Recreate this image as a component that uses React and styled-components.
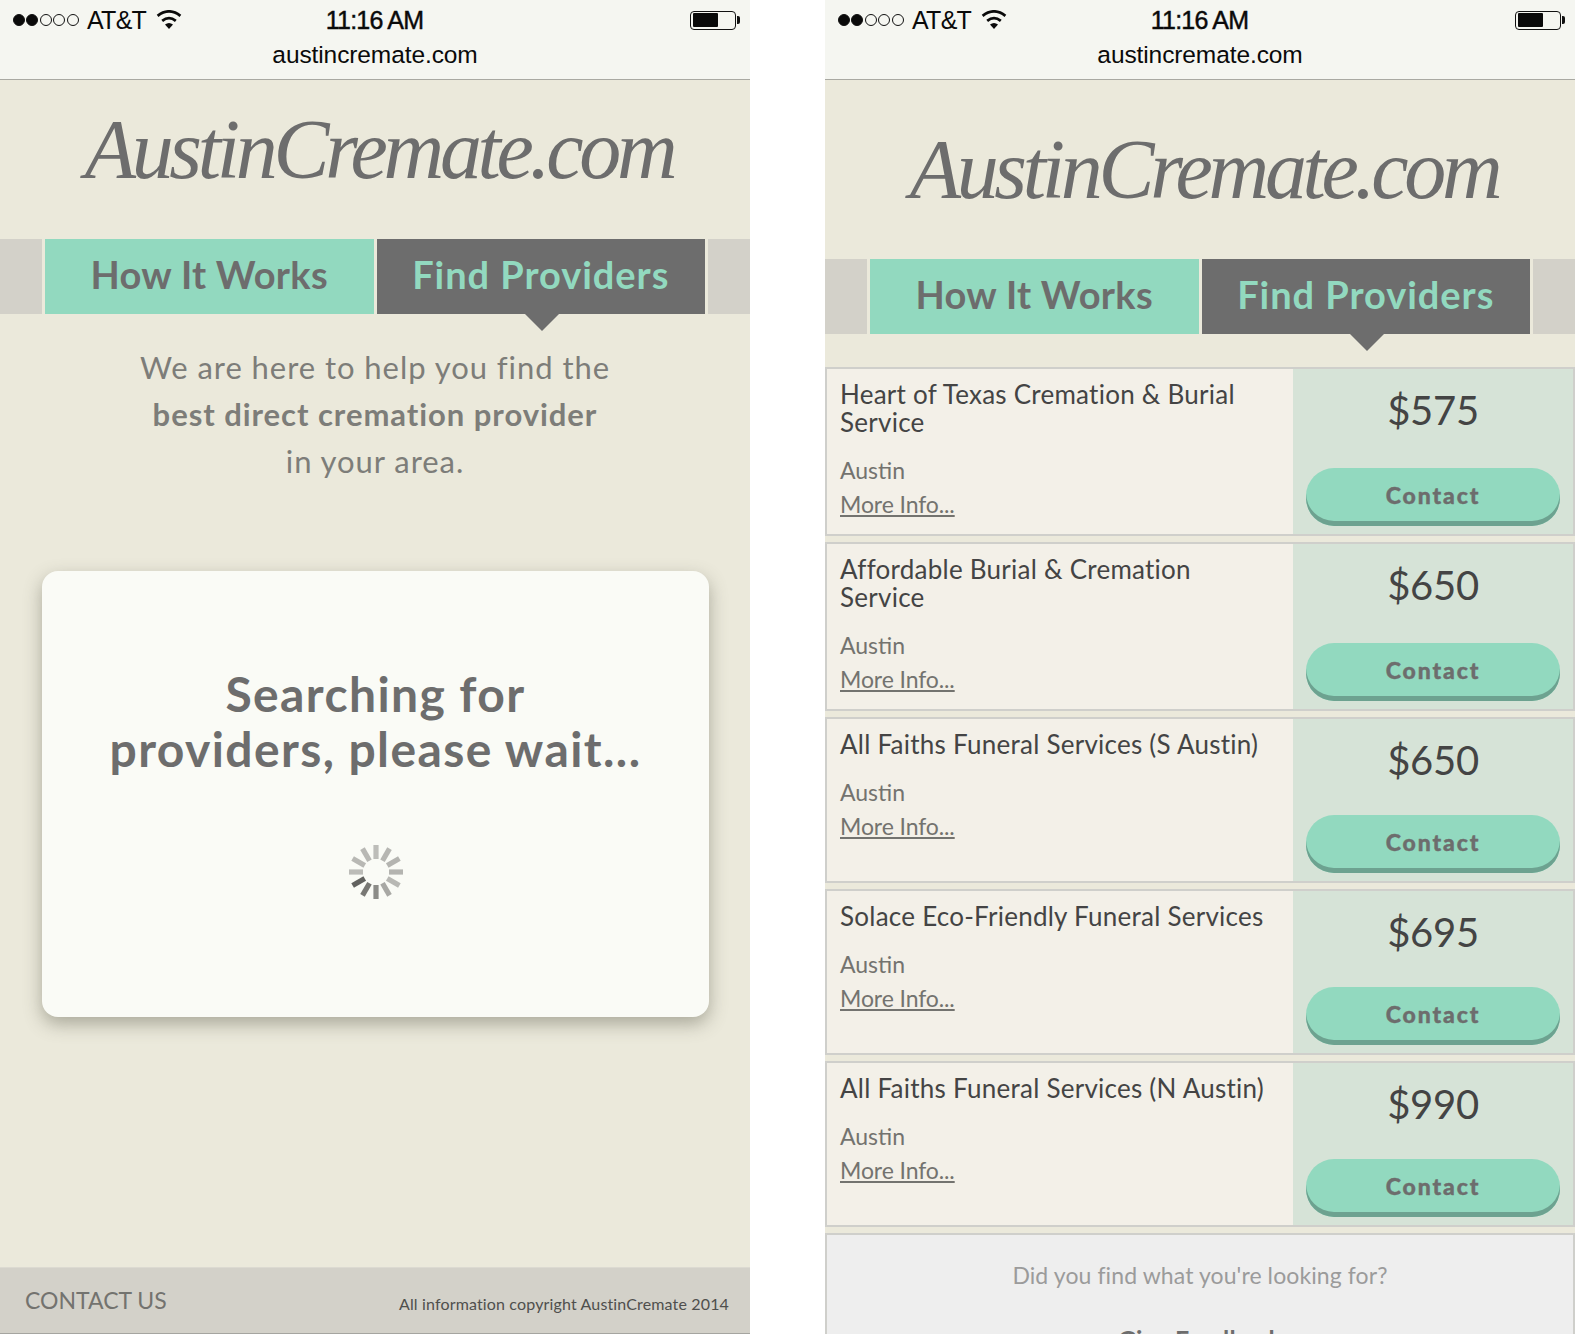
import React from "react";
import styled, { createGlobalStyle } from "styled-components";

const Global = createGlobalStyle`
  html, body { margin: 0; padding: 0; background: #fff; }
  body { width: 1575px; height: 1334px; overflow: hidden; font-family: "Lato", "Liberation Sans", sans-serif; }
  * { box-sizing: border-box; }
`;

const Screens = styled.div`
  display: flex;
  gap: 75px;
  width: 1575px;
  height: 1334px;
  overflow: hidden;
`;
const Phone = styled.div`
  width: 750px;
  height: 1334px;
  background: #ebe9db;
  display: flex;
  flex-direction: column;
  overflow: hidden;
  flex: none;
`;
const Chrome = styled.div`
  height: 80px;
  flex: none;
  background: #f5f6f1;
  border-bottom: 1px solid #a9a9a2;
  font-family: "Liberation Sans", Arial, sans-serif;
  color: #0a0a0a;
`;
const StatusRow = styled.div`
  height: 40px;
  display: grid;
  grid-template-columns: 1fr auto 1fr;
  align-items: center;
  padding: 0 14px 0 13px;
`;
const StatusLeft = styled.div`
  display: flex;
  align-items: center;
`;
const Carrier = styled.span`
  font-size: 25px;
  margin: 0 10px 0 7px;
  letter-spacing: -0.7px;
`;
const Time = styled.span`
  font-size: 25px;
  letter-spacing: -0.8px;
  -webkit-text-stroke: 0.45px #0a0a0a;
`;
const Dot = styled.span`
  width: 12px;
  height: 12px;
  margin-right: 1.4px;
  border-radius: 50%;
  border: 1px solid #111;
  background: ${(p) => (p.$on ? "#0a0a0a" : "transparent")};
`;
const Battery = styled.div`
  justify-self: end;
  position: relative;
  width: 46px;
  height: 19px;
  border: 1.5px solid #111;
  border-radius: 4px;
  padding: 1.5px;
  &::after {
    content: "";
    position: absolute;
    right: -5px;
    top: 4px;
    width: 3px;
    height: 8px;
    background: #111;
    border-radius: 0 2px 2px 0;
  }
`;
const BatteryFill = styled.div`
  width: 25px;
  height: 100%;
  background: #0a0a0a;
  border-radius: 1px;
`;
const Url = styled.div`
  text-align: center;
  font-size: 24.5px;
  line-height: 30px;
  letter-spacing: -0.1px;
`;
const LogoArea = styled.div`
  flex: none;
  height: ${(p) => p.$h}px;
  padding: ${(p) => p.$top}px 0 0 8px;
  text-align: center;
`;
const Logo = styled.div`
  font-family: "Liberation Serif", serif;
  font-style: italic;
  font-size: 84px;
  line-height: 100px;
  color: #6d6d6d;
  letter-spacing: -4.3px;
  white-space: nowrap;
`;
const Tabs = styled.div`
  flex: none;
  height: 75px;
  display: grid;
  grid-template-columns: 42px 328.5px 328.5px 1fr;
  column-gap: 3px;
`;
const Filler = styled.div`
  background: #d3d1c9;
`;
const Tab = styled.div`
  position: relative;
  display: flex;
  align-items: center;
  justify-content: center;
  padding-bottom: 6px;
  font-size: 38px;
  font-weight: 700;
  letter-spacing: ${(p) => (p.$active ? "0.95px" : "0.33px")};
  background: ${(p) => (p.$active ? "#6d6d6d" : "#92d9bf")};
  color: ${(p) => (p.$active ? "#92d9bf" : "#6d6d6d")};
  ${(p) =>
    p.$active &&
    `&::after {
      content: "";
      position: absolute;
      left: 148px;
      top: 75px;
      border-style: solid;
      border-width: 17px 17px 0 17px;
      border-color: #6d6d6d transparent transparent transparent;
    }`}
`;
const Intro = styled.div`
  flex: none;
  margin-top: 30px;
  text-align: center;
  font-size: 31px;
  line-height: 47px;
  color: #7d7d79;
  letter-spacing: 0.95px;
`;
const Strong = styled.div`
  font-weight: 700;
`;
const Card = styled.div`
  flex: none;
  margin: 86px 41px 0 42px;
  height: 446px;
  background: #fafbf6;
  border-radius: 16px;
  box-shadow: 0 7px 18px rgba(90, 90, 75, 0.45);
  display: flex;
  flex-direction: column;
  align-items: center;
  padding-top: 95px;
`;
const CardTitle = styled.div`
  text-align: center;
  font-size: 48px;
  font-weight: 700;
  line-height: 55px;
  color: #6d6d6d;
  letter-spacing: 1.4px;
`;
const Footer = styled.div`
  margin-top: auto;
  flex: none;
  height: 67px;
  background: #d3d1c9;
  border-top: 1px solid #dcdad1;
  border-bottom: 1px solid #a5a5a0;
  display: flex;
  align-items: center;
  justify-content: space-between;
  padding: 0 21px 0 25px;
`;
const ContactUs = styled.span`
  font-size: 23px;
  color: #73736f;
  margin-top: -1px;
`;
const Copy = styled.span`
  font-size: 16px;
  color: #4f4f4d;
  margin-top: 6px;
  letter-spacing: 0.15px;
`;
const List = styled.div`
  flex: none;
  margin-top: 33px;
  display: flex;
  flex-direction: column;
  gap: 6px;
`;
const Row = styled.div`
  height: ${(p) => p.$h}px;
  border: 2px solid #cfcfcb;
  display: grid;
  grid-template-columns: 466px 1fr;
`;
const Info = styled.div`
  background: #f3f0e8;
  padding: 11px 25px 0 13px;
`;
const Name = styled.div`
  font-size: 26px;
  line-height: 28px;
  color: #444;
  letter-spacing: 0.25px;
`;
const City = styled.div`
  margin-top: 20px;
  font-size: 23px;
  line-height: 28px;
  color: #73736f;
`;
const More = styled.a`
  display: block;
  margin-top: 6px;
  font-size: 23px;
  line-height: 28px;
  color: #73736f;
  text-decoration: underline;
  letter-spacing: -0.1px;
`;
const Quote = styled.div`
  background: #d6e3d7;
  padding: 0 13px;
  display: flex;
  flex-direction: column;
  align-items: stretch;
`;
const Price = styled.div`
  text-align: center;
  font-size: 40px;
  line-height: 44px;
  margin-top: 19px;
  color: #444;
  letter-spacing: -0.3px;
`;
const Contact = styled.div`
  margin-top: auto;
  margin-bottom: 8px;
  height: 58px;
  padding-bottom: 4px;
  border-radius: 28px;
  background: #92d9bf;
  box-shadow: inset 0 -5px 0 #6da290;
  display: flex;
  align-items: center;
  justify-content: center;
  font-size: 23px;
  font-weight: 900;
  color: #6d6d6d;
  letter-spacing: 1.9px;
  -webkit-text-stroke: 0.4px #6d6d6d;
`;
const Feedback = styled.div`
  height: 120px;
  background: #eee;
  border: 2px solid #cfcfcb;
  text-align: center;
  padding-top: 26px;
  font-size: 23px;
  line-height: 28px;
  color: #9b9b9b;
  letter-spacing: 0.1px;
`;
const GiveFeedback = styled.div`
  margin-top: 36px;
  font-size: 25px;
  font-weight: 700;
  color: #6d6d6d;
`;
const SpinnerWrap = styled.div`
  margin-top: 68px;
  width: 56px;
  height: 56px;
`;

const WifiIcon = () => (
  <svg width="26" height="20" viewBox="0 0 26 20">
    <path d="M13 19 L9 14.5 Q13 11.5 17 14.5 Z" fill="#0a0a0a" />
    <path d="M6.2 10.8 Q13 5.4 19.8 10.8" fill="none" stroke="#0a0a0a" strokeWidth="2.8" />
    <path d="M1.6 5.8 Q13 -3 24.4 5.8" fill="none" stroke="#0a0a0a" strokeWidth="2.8" />
  </svg>
);

const Status = () => (
  <Chrome>
    <StatusRow>
      <StatusLeft>
        <Dot $on />
        <Dot $on />
        <Dot />
        <Dot />
        <Dot />
        <Carrier>AT&amp;T</Carrier>
        <WifiIcon />
      </StatusLeft>
      <Time>11:16 AM</Time>
      <Battery>
        <BatteryFill />
      </Battery>
    </StatusRow>
    <Url>austincremate.com</Url>
  </Chrome>
);

const TabBar = () => (
  <Tabs>
    <Filler />
    <Tab>How It Works</Tab>
    <Tab $active>Find Providers</Tab>
    <Filler />
  </Tabs>
);

const shades = ["#bdbdb9", "#b6b6b2", "#b4b4b0", "#b4b4b0", "#b8b8b4", "#a8a8a4", "#8c8c88", "#787874", "#62625f", "#bcbcb8", "#b8b8b4", "#b8b8b4"];
const SpinnerIcon = () => (
  <svg viewBox="0 0 56 56" width="56" height="56">
    {shades.map((c, i) => (
      <rect key={i} x="25.4" y="1" width="5.2" height="14" fill={c} transform={`rotate(${i * 30} 28 28)`} />
    ))}
  </svg>
);

const providers = [
  { name: "Heart of Texas Cremation & Burial Service", price: "$575", h: 169 },
  { name: "Affordable Burial & Cremation Service", price: "$650", h: 169 },
  { name: "All Faiths Funeral Services (S Austin)", price: "$650", h: 166 },
  { name: "Solace Eco-Friendly Funeral Services", price: "$695", h: 166 },
  { name: "All Faiths Funeral Services (N Austin)", price: "$990", h: 166 },
];

export default function App() {
  return (
    <>
      <Global />
      <Screens>
        <Phone>
          <Status />
          <LogoArea $h={159} $top={20}>
            <Logo>AustinCremate.com</Logo>
          </LogoArea>
          <TabBar />
          <Intro>
            We are here to help you find the
            <Strong>best direct cremation provider</Strong>
            in your area.
          </Intro>
          <Card>
            <CardTitle>
              Searching for
              <br />
              providers, please wait...
            </CardTitle>
            <SpinnerWrap>
              <SpinnerIcon />
            </SpinnerWrap>
          </Card>
          <Footer>
            <ContactUs>CONTACT US</ContactUs>
            <Copy>All information copyright AustinCremate 2014</Copy>
          </Footer>
        </Phone>
        <Phone>
          <Status />
          <LogoArea $h={179} $top={40}>
            <Logo>AustinCremate.com</Logo>
          </LogoArea>
          <TabBar />
          <List>
            {providers.map((p) => (
              <Row key={p.name} $h={p.h}>
                <Info>
                  <Name>{p.name}</Name>
                  <City>Austin</City>
                  <More>More Info...</More>
                </Info>
                <Quote>
                  <Price>{p.price}</Price>
                  <Contact>Contact</Contact>
                </Quote>
              </Row>
            ))}
            <Feedback>
              Did you find what you're looking for?
              <GiveFeedback>Give Feedback</GiveFeedback>
            </Feedback>
          </List>
        </Phone>
      </Screens>
    </>
  );
}
